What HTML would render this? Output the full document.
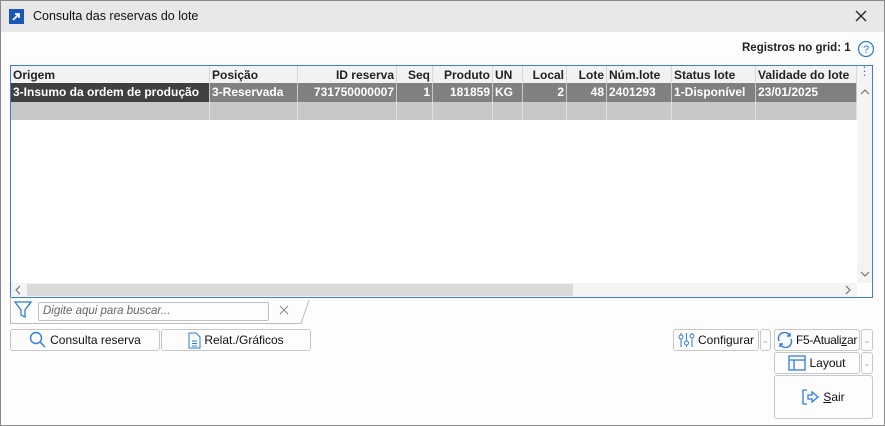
<!DOCTYPE html><html><head><style>
*{box-sizing:border-box;margin:0;padding:0}
body{width:885px;height:426px;background:#fdfdfd;font-family:"Liberation Sans",sans-serif;position:relative;overflow:hidden}
.a{position:absolute}
.frame{left:0;top:0;width:885px;height:426px;border:1px solid #8a8a8a;pointer-events:none}
.title{left:0;top:0;width:885px;height:32px;background:#e8e8e8}
.grid{left:10px;top:65px;width:863px;height:233px;border:1px solid #3b7fd4;background:#fff}
.c{position:absolute;height:18px;line-height:18px;font-size:12px;font-weight:bold;padding:0 2px;white-space:nowrap;overflow:hidden;border-right:1px solid #d8d8d8}
.h{background:#f2f2f2;color:#222;top:0}
.r1{top:17px;background:#808080;color:#fff;border-right:1px solid #c8c8c8;height:19px;line-height:19px}
.r2{top:36px;background:#c8c8c8;border-right:1px solid #e0e0e0}
.R{text-align:right}
.btn{position:absolute;border:1px solid #c8c8c8;border-radius:3px;background:#fdfdfd;font-size:12px;color:#111;display:flex;align-items:center;justify-content:center;gap:3px;white-space:nowrap}
.dd{position:absolute;border:1px solid #c8c8c8;border-radius:3px;background:#fdfdfd;font-size:8px;color:#8ab;text-align:center}
</style></head><body>
<div class="a title"></div>
<div class="a" style="left:9px;top:9px;width:15px;height:15px;background:#1a56b8"><svg width="15" height="15"><path d="M4 11L10 5M6 5h4v4" stroke="#fff" stroke-width="1.8" fill="none"/></svg></div>
<div class="a" style="left:33px;top:9px;font-size:12.5px;color:#111">Consulta das reservas do lote</div>
<svg class="a" style="left:855px;top:10px" width="12" height="12"><path d="M1 1L11 11M11 1L1 11" stroke="#222" stroke-width="1.3"/></svg>
<div class="a" style="left:742px;top:42px;font-size:11.5px;font-weight:bold;color:#222">Registros no grid: 1</div>
<svg class="a" style="left:857px;top:40px" width="18" height="18"><circle cx="9" cy="9" r="7.5" stroke="#2b7de0" stroke-width="1.3" fill="none"/><text x="9" y="13" font-size="11" text-anchor="middle" fill="#2b7de0" font-family="Liberation Sans">?</text></svg>
<div class="a grid">
<div class="c h" style="left:0;width:199px">Origem</div><div class="c h" style="left:199px;width:88px">Posição</div><div class="c h R" style="left:287px;width:99px">ID reserva</div><div class="c h R" style="left:386px;width:36px">Seq</div><div class="c h R" style="left:422px;width:60px">Produto</div><div class="c h" style="left:482px;width:30px">UN</div><div class="c h R" style="left:512px;width:44px">Local</div><div class="c h R" style="left:556px;width:40px">Lote</div><div class="c h" style="left:596px;width:65px">Núm.lote</div><div class="c h" style="left:661px;width:84px">Status lote</div><div class="c h" style="left:745px;width:101px">Validade do lote</div>
<div class="c r1" style="left:0;width:199px;background:#404040">3-Insumo da ordem de produção</div><div class="c r1" style="left:199px;width:88px">3-Reservada</div><div class="c r1 R" style="left:287px;width:99px">731750000007</div><div class="c r1 R" style="left:386px;width:36px">1</div><div class="c r1 R" style="left:422px;width:60px">181859</div><div class="c r1" style="left:482px;width:30px">KG</div><div class="c r1 R" style="left:512px;width:44px">2</div><div class="c r1 R" style="left:556px;width:40px">48</div><div class="c r1" style="left:596px;width:65px">2401293</div><div class="c r1" style="left:661px;width:84px">1-Disponível</div><div class="c r1" style="left:745px;width:101px">23/01/2025</div>
<div class="c r2" style="left:0;width:199px"></div><div class="c r2" style="left:199px;width:88px"></div><div class="c r2" style="left:287px;width:99px"></div><div class="c r2" style="left:386px;width:36px"></div><div class="c r2" style="left:422px;width:60px"></div><div class="c r2" style="left:482px;width:30px"></div><div class="c r2" style="left:512px;width:44px"></div><div class="c r2" style="left:556px;width:40px"></div><div class="c r2" style="left:596px;width:65px"></div><div class="c r2" style="left:661px;width:84px"></div><div class="c r2" style="left:745px;width:101px"></div>
<div class="a" style="left:846px;top:0;width:15px;height:217px;background:#f4f4f4;color:#3b7fd4;font-size:12px;text-align:center;line-height:10px">⋮</div>
<svg class="a" style="left:849px;top:22px" width="10" height="8"><path d="M1 6L5 2L9 6" stroke="#666" fill="none"/></svg>
<svg class="a" style="left:849px;top:204px" width="10" height="8"><path d="M1 2L5 6L9 2" stroke="#666" fill="none"/></svg>
<div class="a" style="left:0;top:217px;width:846px;height:14px;background:#f4f4f4"></div>
<div class="a" style="left:16px;top:218px;width:546px;height:12px;background:#dadada"></div>
<svg class="a" style="left:3px;top:219px" width="8" height="10"><path d="M6 1L2 5L6 9" stroke="#666" fill="none"/></svg>
<svg class="a" style="left:833px;top:219px" width="8" height="10"><path d="M2 1L6 5L2 9" stroke="#666" fill="none"/></svg>
</div>
<svg class="a" style="left:10px;top:297px" width="300" height="27"><path d="M0.5 0V26.5H291L299 3" stroke="#bbb" fill="none"/><path d="M5 5H21L15 13V20L11 18V13Z" stroke="#2b7de0" stroke-width="1.3" fill="none"/><path d="M270 9L278 17M278 9L270 17" stroke="#888"/></svg>
<div class="a" style="left:38px;top:302px;width:231px;height:19px;border:1px solid #c0c0c0;border-radius:2px;font-size:11.5px;font-style:italic;color:#666;padding:2px 4px">Digite aqui para buscar...</div>
<div class="btn" style="left:10px;top:329px;width:150px;height:22px"><svg width="18" height="18"><circle cx="7" cy="7" r="5.5" stroke="#2b7de0" stroke-width="1.4" fill="none"/><path d="M11 11L16 16" stroke="#2b7de0" stroke-width="1.5"/></svg><span>Consulta reserva</span></div>
<div class="btn" style="left:161px;top:329px;width:150px;height:22px"><svg width="13" height="17"><path d="M1 1H8L12 5V16H1Z" stroke="#2b7de0" fill="none"/><path d="M4 9H9M4 11.5H9M4 14H9" stroke="#2b7de0"/></svg><span>Relat./Gráficos</span></div>
<div class="btn" style="left:673px;top:329px;width:86px;height:22px"><svg width="17" height="16" stroke="#2b7de0" fill="none"><path d="M3 1V15M8.5 1V15M14 1V15"/><circle cx="3" cy="5" r="2" fill="#fff"/><circle cx="8.5" cy="11" r="2" fill="#fff"/><circle cx="14" cy="4" r="2" fill="#fff"/></svg><span>Configurar</span></div>
<div class="dd" style="left:760px;top:329px;width:11px;height:22px;line-height:22px">⌄</div>
<div class="btn" style="left:774px;top:329px;width:86px;height:22px;letter-spacing:-0.3px"><svg width="16" height="16" stroke="#2b7de0" fill="none" stroke-width="1.4"><path d="M2 9A6 6 0 0 1 13 4M13 1V4H10M14 7A6 6 0 0 1 3 12M3 15V12H6"/></svg><span>F5-Atuali<u>z</u>ar</span></div>
<div class="dd" style="left:861px;top:329px;width:12px;height:22px;line-height:22px">⌄</div>
<div class="btn" style="left:774px;top:352px;width:86px;height:22px"><svg width="18" height="16" stroke="#2b7de0" fill="none" stroke-width="1.3"><rect x="1" y="1" width="16" height="14"/><path d="M1 5H17M6 5V15"/></svg><span>Layout</span></div>
<div class="dd" style="left:861px;top:352px;width:12px;height:22px;line-height:22px">⌄</div>
<div class="btn" style="left:774px;top:375px;width:99px;height:44px"><svg width="18" height="16" stroke="#2b7de0" fill="none" stroke-width="1.3"><path d="M5 1H1V15H5M6 6H10V3L16 8L10 13V10H6Z"/></svg><span><u>S</u>air</span></div>
<div class="a frame"></div>
</body></html>
